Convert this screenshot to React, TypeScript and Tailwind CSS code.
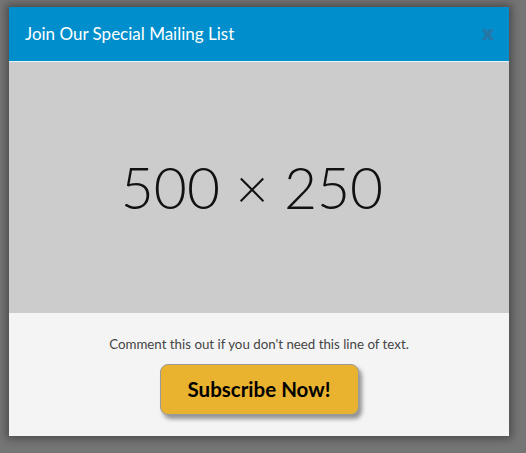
export default function App() {
  return (
    <div className="w-[526px] h-[453px] bg-[#757575] pt-[7px] pl-[9px]" style={{ fontFamily: "Lato, 'Open Sans', sans-serif" }}>
      <div className="w-[500px] flex flex-col shadow-[0_0_8px_3px_rgba(0,0,0,0.35)]">
        <div className="h-[55px] bg-[#008fcc] border-b border-[#e6f3fa] flex items-center justify-between pl-[16px] pr-[15px]">
          <span className="text-white text-[17px]">Join Our Special Mailing List</span>
          <span className="text-[#2677a8] text-[20px] font-extrabold leading-none mb-[2px]" style={{ fontFamily: "'Open Sans', sans-serif" }}>x</span>
        </div>
        <div className="h-[251px] bg-[#cccccc] flex items-center justify-center pr-[14px]">
          <span className="text-[57px] font-light text-[#111]">500 × 250</span>
        </div>
        <div className="h-[123px] bg-[#f4f4f4] flex flex-col items-center pt-[22px]">
          <p className="text-[13.3px] text-[#444] leading-[18px]">Comment this out if you don't need this line of text.</p>
          <button className="mt-[11px] w-[199px] h-[51px] rounded-[8px] bg-[#e9b22f] border border-[#9a9a9a] shadow-[3px_4px_4px_rgba(0,0,0,0.4)] text-[20.5px] font-bold text-black">Subscribe Now!</button>
        </div>
      </div>
    </div>
  );
}
